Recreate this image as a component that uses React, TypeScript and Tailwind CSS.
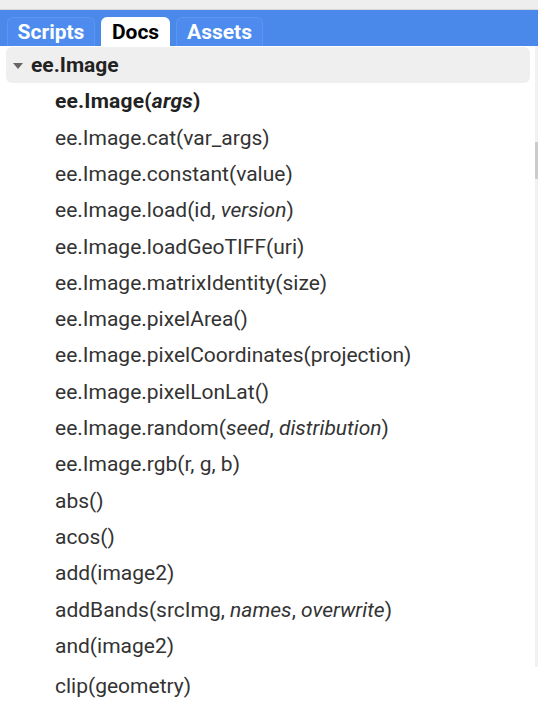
import React from 'react';

type Part = { t: string; i?: boolean };

const ROWS: Part[][] = [
  [{ t: 'ee.Image.cat(var_args)' }],
  [{ t: 'ee.Image.constant(value)' }],
  [{ t: 'ee.Image.load(id, ' }, { t: 'version', i: true }, { t: ')' }],
  [{ t: 'ee.Image.loadGeoTIFF(uri)' }],
  [{ t: 'ee.Image.matrixIdentity(size)' }],
  [{ t: 'ee.Image.pixelArea()' }],
  [{ t: 'ee.Image.pixelCoordinates(projection)' }],
  [{ t: 'ee.Image.pixelLonLat()' }],
  [{ t: 'ee.Image.random(' }, { t: 'seed', i: true }, { t: ', ' }, { t: 'distribution', i: true }, { t: ')' }],
  [{ t: 'ee.Image.rgb(r, g, b)' }],
  [{ t: 'abs()' }],
  [{ t: 'acos()' }],
  [{ t: 'add(image2)' }],
  [{ t: 'addBands(srcImg, ' }, { t: 'names', i: true }, { t: ', ' }, { t: 'overwrite', i: true }, { t: ')' }],
  [{ t: 'and(image2)' }],
];

export default function App() {
  return (
    <div className="w-[549px] h-[702px] bg-white overflow-hidden text-[#333]" style={{ fontFamily: 'Roboto, "Liberation Sans", sans-serif' }}>
      <div className="w-[538px] relative">
        {/* top strip */}
        <div className="h-[10px] bg-[#eeeeee] border-b border-[#d6d6d6]" />
        {/* tab bar */}
        <div className="h-[36px] bg-[#4a89ea] flex items-end gap-[6px] pl-[7px]">
          <div className="h-[29px] w-[88px] pt-[2px] rounded-t-[6px] bg-[#4d8cee] border border-b-0 border-[#5b96f0] flex items-center justify-center text-white font-bold text-[21px]">
            Scripts
          </div>
          <div className="h-[29px] w-[69px] pt-[2px] rounded-t-[6px] bg-white flex items-center justify-center text-black font-bold text-[21px]">
            Docs
          </div>
          <div className="h-[29px] w-[87px] pt-[2px] rounded-t-[6px] bg-[#4d8cee] border border-b-0 border-[#5b96f0] flex items-center justify-center text-white font-bold text-[21px]">
            Assets
          </div>
        </div>

        {/* header row */}
        <div className="mx-[6px] mr-[8px] mt-[1px] h-[36px] pt-[1px] bg-[#efefef] rounded-[6px] flex items-center pl-[7px] gap-[8px]">
          <svg width="10" height="6" viewBox="0 0 10 6">
            <path d="M0 0 L10 0 L5 6 Z" fill="#666" />
          </svg>
          <span className="font-bold text-[21px] text-[#222]">ee.Image</span>
        </div>

        {/* list */}
        <div className="pl-[55px] pt-[1px]">
          <div className="h-[36.3px] flex items-center text-[21px] font-bold text-[#222] tracking-[0.2px]">
            ee.Image(<i>args</i>)
          </div>
          {ROWS.map((row, idx) => (
            <div key={idx} className="h-[36.3px] flex items-center text-[21px] whitespace-pre">
              {row.map((p, j) => (p.i ? <i key={j}>{p.t}</i> : <span key={j}>{p.t}</span>))}
            </div>
          ))}
          <div className="h-[36px] pt-[7px] flex items-center text-[21px] leading-none">clip(geometry)</div>
        </div>

        {/* scrollbar */}
        <div className="absolute right-0 top-[46px] h-[621px] w-[3px] bg-[#f1f1f1]">
          <div className="mt-[96px] h-[37px] bg-[#cccccc]" />
        </div>
      </div>
    </div>
  );
}
